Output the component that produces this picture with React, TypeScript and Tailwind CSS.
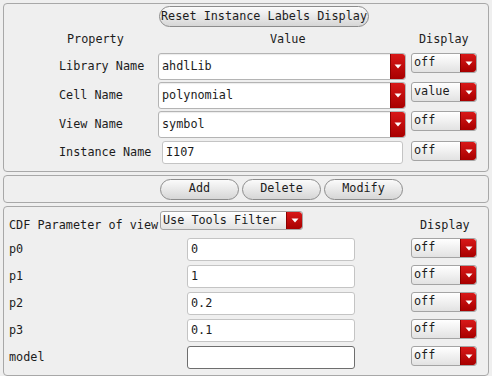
import React from "react";

const mono = "font-['DejaVu_Sans_Mono',monospace] text-[11.8px] text-[#1c1c1c]";

const Arrow = () => (
  <svg width="8" height="5" viewBox="0 0 8 5">
    <path d="M0.5 0.5 L7.5 0.5 L4 4.5 Z" fill="#ffffff" />
  </svg>
);

const RedTab = ({ w = "w-[15px]" }: { w?: string }) => (
  <div className={`${w} self-stretch flex items-center justify-center rounded-r-[3px] bg-gradient-to-b from-[#d81818] to-[#a80000] border-l border-[#8a0000]`}>
    <Arrow />
  </div>
);

// editable combo used for library / cell / view
const ValueCombo = ({ value }: { value: string }) => (
  <div className="w-[248px] h-[27px] flex bg-white border border-[#b4b4b4] rounded-[3px] shadow-[inset_0_1px_1px_rgba(0,0,0,0.08)]">
    <div className="flex-1 flex items-center pl-[3px]">{value}</div>
    <RedTab />
  </div>
);

// small option menu (display / filter)
const Menu = ({ value, w = "w-[66px]", h = "h-[20px]" }: { value: string; w?: string; h?: string }) => (
  <div className={`${w} ${h} flex border border-[#a4a4a4] rounded-[3px] bg-gradient-to-b from-[#ffffff] to-[#e2e2e2] overflow-hidden`}>
    <div className="flex-1 flex items-center pl-[2px]">{value}</div>
    <RedTab w="w-[16px]" />
  </div>
);

const Input = ({ value, w, dark = false }: { value: string; w: string; dark?: boolean }) => (
  <div className={`${w} h-[23px] flex items-center pl-[3px] bg-white rounded-[3px] border ${dark ? "border-[#6e6e6e]" : "border-[#c4c4c4]"}`}>
    {value}
  </div>
);

const Pill = ({ label, w }: { label: string; w: string }) => (
  <div className={`${w} h-[21px] flex items-center justify-center rounded-full border border-[#8c8c8c] bg-gradient-to-b from-[#fbfbfb] to-[#d6d6d6] leading-none`}>
    {label}
  </div>
);

const props = [
  { label: "Library Name", value: "ahdlLib", display: "off" },
  { label: "Cell Name", value: "polynomial", display: "value" },
  { label: "View Name", value: "symbol", display: "off" },
];

const params = [
  { name: "p0", value: "0" },
  { name: "p1", value: "1" },
  { name: "p2", value: "0.2" },
  { name: "p3", value: "0.1" },
  { name: "model", value: "", dark: true },
];

export default function App() {
  return (
    <div className={`w-[492px] h-[376px] bg-[#efefef] px-[3px] pt-[3px] flex flex-col gap-[3px] overflow-hidden ${mono}`}>
      {/* --- Instance properties --- */}
      <div className="h-[169px] border border-[#a8a8a8] rounded-[4px] flex flex-col">
        <div className="pt-[2px] pl-[155px]">
          <Pill label="Reset Instance Labels Display" w="w-[210px]" />
        </div>
        <div className="flex h-[26px] items-center">
          <div className="w-[63px]" />
          <div className="w-[203px]">Property</div>
          <div className="w-[149px]">Value</div>
          <div>Display</div>
        </div>
        <div className="flex flex-col gap-[2px]">
          {props.map((p) => (
            <div key={p.label} className="flex items-start">
              <div className="w-[154px] h-[27px] flex items-center pl-[55px]">{p.label}</div>
              <ValueCombo value={p.value} />
              <div className="ml-[5px]">
                <Menu value={p.display} />
              </div>
            </div>
          ))}
          <div className="flex items-start pt-[1px]">
            <div className="w-[158px] h-[24px] flex items-center pl-[55px]">Instance Name</div>
            <Input value="I107" w="w-[241px]" />
            <div className="ml-[8px]">
              <Menu value="off" />
            </div>
          </div>
        </div>
      </div>

      {/* --- Actions --- */}
      <div className="h-[28px] border border-[#a8a8a8] rounded-[4px] flex items-center gap-[3px] pl-[156px]">
        <Pill label="Add" w="w-[79px]" />
        <Pill label="Delete" w="w-[79px]" />
        <Pill label="Modify" w="w-[79px]" />
      </div>

      {/* --- CDF parameters --- */}
      <div className="h-[170px] border border-[#a8a8a8] rounded-[4px] flex flex-col pl-[5px]">
        <div className="flex items-start pt-[4px] h-[31px]">
          <div className="w-[151px] pt-[6px] whitespace-nowrap">CDF Parameter of view</div>
          <Menu value="Use Tools Filter" w="w-[143px]" h="h-[19px]" />
          <div className="ml-[117px] pt-[6px]">Display</div>
        </div>
        <div className="flex flex-col gap-[4px]">
          {params.map((p) => (
            <div key={p.name} className="flex items-start">
              <div className="w-[178px] h-[23px] flex items-center">{p.name}</div>
              <Input value={p.value} w="w-[168px]" dark={p.dark} />
              <div className="ml-[56px]">
                <Menu value="off" />
              </div>
            </div>
          ))}
        </div>
      </div>
    </div>
  );
}
